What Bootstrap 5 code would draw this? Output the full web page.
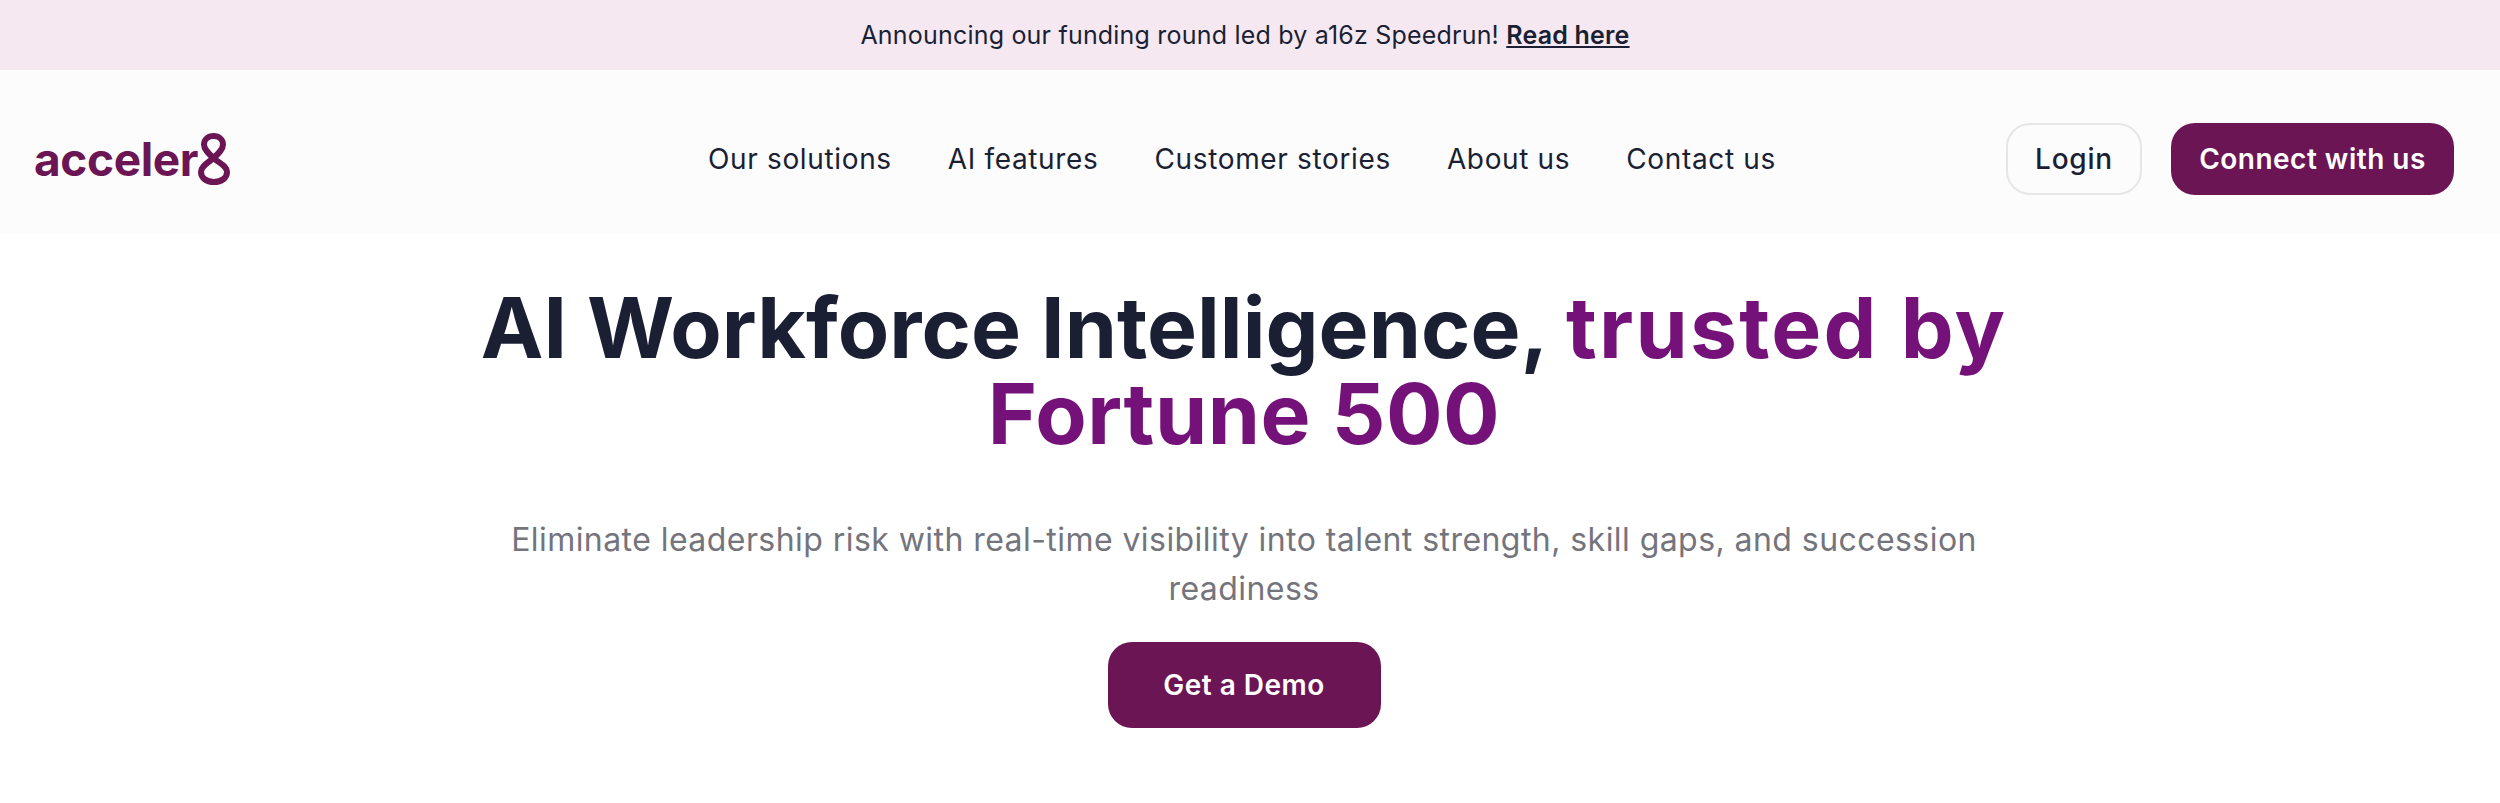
<!DOCTYPE html>
<html lang="en">
<head>
  <meta charset="UTF-8" />
  <meta name="viewport" content="width=device-width, initial-scale=1" />
  <title>acceler8</title>
  <link href="https://cdn.jsdelivr.net/npm/bootstrap@5.3.2/dist/css/bootstrap.min.css" rel="stylesheet" />
  <style>
    body {
      font-family: Inter, "Liberation Sans", sans-serif;
      color: #1a1f33;
      background: #fff;
    }

    .promo-bar {
      height: 70px;
      padding: 1px 10px 0 0;
      background: #f6e8f0;
      font-size: 25px;
      letter-spacing: .2px;
    }

    .promo-bar a {
      color: #1a1f33;
      font-weight: 600;
    }

    .top-nav {
      height: 164px;
      padding: 14px 46px 0 34px;
      background: #fcfcfc;
    }

    .logo-link {
      width: 198px;
      color: #6b1555;
      text-decoration: none;
    }

    .logo-text {
      font-size: 46px;
      font-weight: 700;
      letter-spacing: -.4px;
      line-height: 1;
    }

    .nav-items {
      gap: 56px;
      margin-left: 476px;
    }

    .nav-items a {
      color: #1a1f33;
      font-size: 28px;
      letter-spacing: .65px;
      text-decoration: none;
    }

    .btn-login,
    .btn-connect,
    .btn-demo {
      font-weight: 600;
      border-radius: 24px;
      letter-spacing: .5px;
    }

    .btn-login {
      width: 136px;
      height: 72px;
      font-size: 28px;
      font-weight: 500;
      letter-spacing: .8px;
      color: #1a1f33;
      background: #fcfcfc;
      border: 2px solid #e6e6e8;
    }

    .btn-connect {
      width: 283px;
      height: 72px;
      margin-left: 29px;
      font-size: 28px;
      color: #fff;
      background: #6b1555;
      border: 0;
    }

    .hero-main {
      padding-right: 12px;
    }

    .hero-title {
      width: 1600px;
      margin: 51px 0 0;
      font-size: 84px;
      font-weight: 700;
      letter-spacing: .05px;
      line-height: 86px;
      color: #1a1f33;
    }

    .accent-one {
      color: #75127a;
      letter-spacing: 2.2px;
    }

    .accent-two {
      color: #75127a;
      letter-spacing: .55px;
    }

    .hero-sub {
      width: 1500px;
      margin: 58px 0 0;
      font-size: 32px;
      letter-spacing: .44px;
      line-height: 49px;
      color: #74747c;
    }

    .btn-demo {
      width: 273px;
      height: 86px;
      margin-top: 29px;
      font-size: 28px;
      color: #fff;
      background: #6b1555;
      border: 0;
    }
  </style>
</head>
<body>
  <div class="promo-bar d-flex align-items-center justify-content-center">
    <span>Announcing our funding round led by a16z Speedrun! <a href="#">Read here</a></span>
  </div>

  <nav class="top-nav d-flex align-items-center">
    <a class="logo-link d-flex align-items-center flex-shrink-0" href="#">
      <span class="logo-text">acceler</span>
      <!-- the 8 is the crossed loop from the logo, drawn as one stroke -->
      <svg class="flex-shrink-0" width="32" height="52" viewBox="0 0 32 52" fill="none" stroke="#6b1555" stroke-width="6">
        <path d="M15.500 25 C10 20 6 16 6 11.500 C6 6.500 10 3 15.500 3 C21 3 25 6.500 25 11.500 C25 16 21 20 15.500 25 C10 30 3 33 3 39 C3 45 8.500 49 16 49 C23.500 49 29 45 29 39 C29 33 21 30 15.500 25 Z" />
      </svg>
    </a>
    <div class="nav-items d-flex align-items-center">
      <a href="#">Our solutions</a>
      <a href="#">AI features</a>
      <a href="#">Customer stories</a>
      <a href="#">About us</a>
      <a href="#">Contact us</a>
    </div>
    <div class="d-flex ms-auto">
      <button class="btn btn-login p-0">Login</button>
      <button class="btn btn-connect p-0">Connect with us</button>
    </div>
  </nav>

  <main class="hero-main d-flex flex-column align-items-center text-center">
    <h1 class="hero-title">AI Workforce Intelligence, <span class="accent-one">trusted by</span><br><span class="accent-two">Fortune 500</span></h1>
    <p class="hero-sub">Eliminate leadership risk with real-time visibility into talent strength, skill gaps, and succession readiness</p>
    <button class="btn btn-demo p-0">Get a Demo</button>
  </main>

  <script src="https://cdn.jsdelivr.net/npm/bootstrap@5.3.2/dist/js/bootstrap.bundle.min.js"></script>
</body>
</html>
